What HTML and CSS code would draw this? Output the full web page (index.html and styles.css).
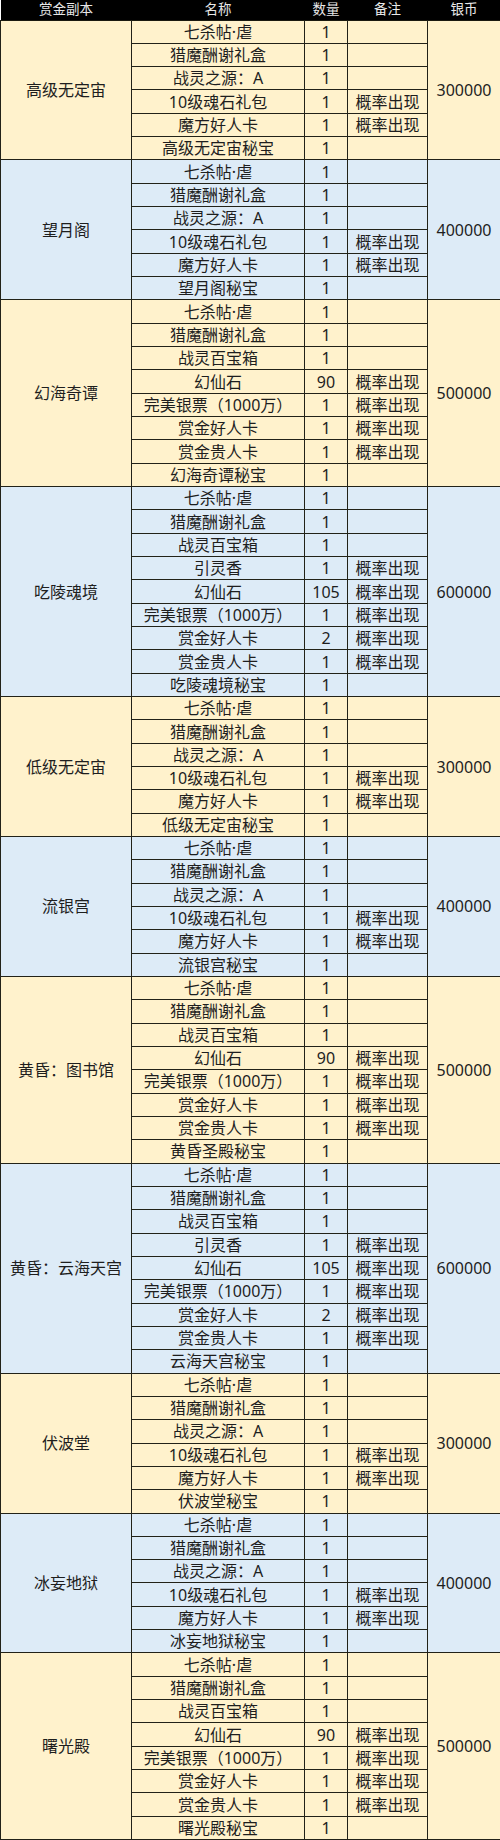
FILE: index.html
```html
<!DOCTYPE html>
<html lang="zh">
<head>
<meta charset="utf-8">
<title>赏金副本</title>
<link rel="stylesheet" href="styles.css">
</head>
<body>
<table class="loot">
<colgroup><col class="c1"><col class="c2"><col class="c3"><col class="c4"><col class="c5"></colgroup>
<thead>
<tr class="head"><th>赏金副本</th><th>名称</th><th>数量</th><th>备注</th><th>银币</th></tr>
</thead>
<tbody class="y">
<tr class="first"><td rowspan="6" class="dg">高级无定宙</td><td>七杀帖·虐</td><td>1</td><td></td><td rowspan="6" class="coin">300000</td></tr>
<tr><td>猎魔酬谢礼盒</td><td>1</td><td></td></tr>
<tr><td>战灵之源：A</td><td>1</td><td></td></tr>
<tr><td>10级魂石礼包</td><td>1</td><td>概率出现</td></tr>
<tr><td>魔方好人卡</td><td>1</td><td>概率出现</td></tr>
<tr><td>高级无定宙秘宝</td><td>1</td><td></td></tr>
</tbody>
<tbody class="b">
<tr class="first"><td rowspan="6" class="dg">望月阁</td><td>七杀帖·虐</td><td>1</td><td></td><td rowspan="6" class="coin">400000</td></tr>
<tr><td>猎魔酬谢礼盒</td><td>1</td><td></td></tr>
<tr><td>战灵之源：A</td><td>1</td><td></td></tr>
<tr><td>10级魂石礼包</td><td>1</td><td>概率出现</td></tr>
<tr><td>魔方好人卡</td><td>1</td><td>概率出现</td></tr>
<tr><td>望月阁秘宝</td><td>1</td><td></td></tr>
</tbody>
<tbody class="y">
<tr class="first"><td rowspan="8" class="dg">幻海奇谭</td><td>七杀帖·虐</td><td>1</td><td></td><td rowspan="8" class="coin">500000</td></tr>
<tr><td>猎魔酬谢礼盒</td><td>1</td><td></td></tr>
<tr><td>战灵百宝箱</td><td>1</td><td></td></tr>
<tr><td>幻仙石</td><td>90</td><td>概率出现</td></tr>
<tr><td>完美银票（1000万）</td><td>1</td><td>概率出现</td></tr>
<tr><td>赏金好人卡</td><td>1</td><td>概率出现</td></tr>
<tr><td>赏金贵人卡</td><td>1</td><td>概率出现</td></tr>
<tr><td>幻海奇谭秘宝</td><td>1</td><td></td></tr>
</tbody>
<tbody class="b">
<tr class="first"><td rowspan="9" class="dg">吃陵魂境</td><td>七杀帖·虐</td><td>1</td><td></td><td rowspan="9" class="coin">600000</td></tr>
<tr><td>猎魔酬谢礼盒</td><td>1</td><td></td></tr>
<tr><td>战灵百宝箱</td><td>1</td><td></td></tr>
<tr><td>引灵香</td><td>1</td><td>概率出现</td></tr>
<tr><td>幻仙石</td><td>105</td><td>概率出现</td></tr>
<tr><td>完美银票（1000万）</td><td>1</td><td>概率出现</td></tr>
<tr><td>赏金好人卡</td><td>2</td><td>概率出现</td></tr>
<tr><td>赏金贵人卡</td><td>1</td><td>概率出现</td></tr>
<tr><td>吃陵魂境秘宝</td><td>1</td><td></td></tr>
</tbody>
<tbody class="y">
<tr class="first"><td rowspan="6" class="dg">低级无定宙</td><td>七杀帖·虐</td><td>1</td><td></td><td rowspan="6" class="coin">300000</td></tr>
<tr><td>猎魔酬谢礼盒</td><td>1</td><td></td></tr>
<tr><td>战灵之源：A</td><td>1</td><td></td></tr>
<tr><td>10级魂石礼包</td><td>1</td><td>概率出现</td></tr>
<tr><td>魔方好人卡</td><td>1</td><td>概率出现</td></tr>
<tr><td>低级无定宙秘宝</td><td>1</td><td></td></tr>
</tbody>
<tbody class="b">
<tr class="first"><td rowspan="6" class="dg">流银宫</td><td>七杀帖·虐</td><td>1</td><td></td><td rowspan="6" class="coin">400000</td></tr>
<tr><td>猎魔酬谢礼盒</td><td>1</td><td></td></tr>
<tr><td>战灵之源：A</td><td>1</td><td></td></tr>
<tr><td>10级魂石礼包</td><td>1</td><td>概率出现</td></tr>
<tr><td>魔方好人卡</td><td>1</td><td>概率出现</td></tr>
<tr><td>流银宫秘宝</td><td>1</td><td></td></tr>
</tbody>
<tbody class="y">
<tr class="first"><td rowspan="8" class="dg">黄昏：图书馆</td><td>七杀帖·虐</td><td>1</td><td></td><td rowspan="8" class="coin">500000</td></tr>
<tr><td>猎魔酬谢礼盒</td><td>1</td><td></td></tr>
<tr><td>战灵百宝箱</td><td>1</td><td></td></tr>
<tr><td>幻仙石</td><td>90</td><td>概率出现</td></tr>
<tr><td>完美银票（1000万）</td><td>1</td><td>概率出现</td></tr>
<tr><td>赏金好人卡</td><td>1</td><td>概率出现</td></tr>
<tr><td>赏金贵人卡</td><td>1</td><td>概率出现</td></tr>
<tr><td>黄昏圣殿秘宝</td><td>1</td><td></td></tr>
</tbody>
<tbody class="b">
<tr class="first"><td rowspan="9" class="dg">黄昏：云海天宫</td><td>七杀帖·虐</td><td>1</td><td></td><td rowspan="9" class="coin">600000</td></tr>
<tr><td>猎魔酬谢礼盒</td><td>1</td><td></td></tr>
<tr><td>战灵百宝箱</td><td>1</td><td></td></tr>
<tr><td>引灵香</td><td>1</td><td>概率出现</td></tr>
<tr><td>幻仙石</td><td>105</td><td>概率出现</td></tr>
<tr><td>完美银票（1000万）</td><td>1</td><td>概率出现</td></tr>
<tr><td>赏金好人卡</td><td>2</td><td>概率出现</td></tr>
<tr><td>赏金贵人卡</td><td>1</td><td>概率出现</td></tr>
<tr><td>云海天宫秘宝</td><td>1</td><td></td></tr>
</tbody>
<tbody class="y">
<tr class="first"><td rowspan="6" class="dg">伏波堂</td><td>七杀帖·虐</td><td>1</td><td></td><td rowspan="6" class="coin">300000</td></tr>
<tr><td>猎魔酬谢礼盒</td><td>1</td><td></td></tr>
<tr><td>战灵之源：A</td><td>1</td><td></td></tr>
<tr><td>10级魂石礼包</td><td>1</td><td>概率出现</td></tr>
<tr><td>魔方好人卡</td><td>1</td><td>概率出现</td></tr>
<tr><td>伏波堂秘宝</td><td>1</td><td></td></tr>
</tbody>
<tbody class="b">
<tr class="first"><td rowspan="6" class="dg">冰妄地狱</td><td>七杀帖·虐</td><td>1</td><td></td><td rowspan="6" class="coin">400000</td></tr>
<tr><td>猎魔酬谢礼盒</td><td>1</td><td></td></tr>
<tr><td>战灵之源：A</td><td>1</td><td></td></tr>
<tr><td>10级魂石礼包</td><td>1</td><td>概率出现</td></tr>
<tr><td>魔方好人卡</td><td>1</td><td>概率出现</td></tr>
<tr><td>冰妄地狱秘宝</td><td>1</td><td></td></tr>
</tbody>
<tbody class="y">
<tr class="first"><td rowspan="8" class="dg">曙光殿</td><td>七杀帖·虐</td><td>1</td><td></td><td rowspan="8" class="coin">500000</td></tr>
<tr><td>猎魔酬谢礼盒</td><td>1</td><td></td></tr>
<tr><td>战灵百宝箱</td><td>1</td><td></td></tr>
<tr><td>幻仙石</td><td>90</td><td>概率出现</td></tr>
<tr><td>完美银票（1000万）</td><td>1</td><td>概率出现</td></tr>
<tr><td>赏金好人卡</td><td>1</td><td>概率出现</td></tr>
<tr><td>赏金贵人卡</td><td>1</td><td>概率出现</td></tr>
<tr><td>曙光殿秘宝</td><td>1</td><td></td></tr>
</tbody>
</table>
</body>
</html>
```
FILE: styles.css
```css
html, body {
  margin: 0;
  padding: 0;
  background: #ffffff;
}
body {
  font-family: "Noto Sans", "Noto Sans CJK SC", sans-serif;
  color: #1e1e1e;
}
.loot {
  width: 500px;
  border-collapse: collapse;
  table-layout: fixed;
}
.c1 { width: 131px; }
.c2 { width: 173px; }
.c3 { width: 43px; }
.c4 { width: 80px; }
.c5 { width: 73px; }
.head {
  height: 20px;
  background: #000000;
}
.head th {
  color: #e8e8e8;
  font-size: 13.5px;
  font-weight: normal;
  line-height: 1;
  padding: 0;
  text-align: center;
  border: none;
}
.loot td {
  height: 22.33px;
  padding: 0;
  font-size: 16px;
  line-height: 1;
  text-align: center;
  vertical-align: middle;
  border: 1px solid #222218;
  white-space: nowrap;
}
.y td { background: #fff2cc; }
.b td { background: #ddebf7; }
.first td { border-top: 1px solid #1a1a10; }
.coin { font-size: 16px; }
```
